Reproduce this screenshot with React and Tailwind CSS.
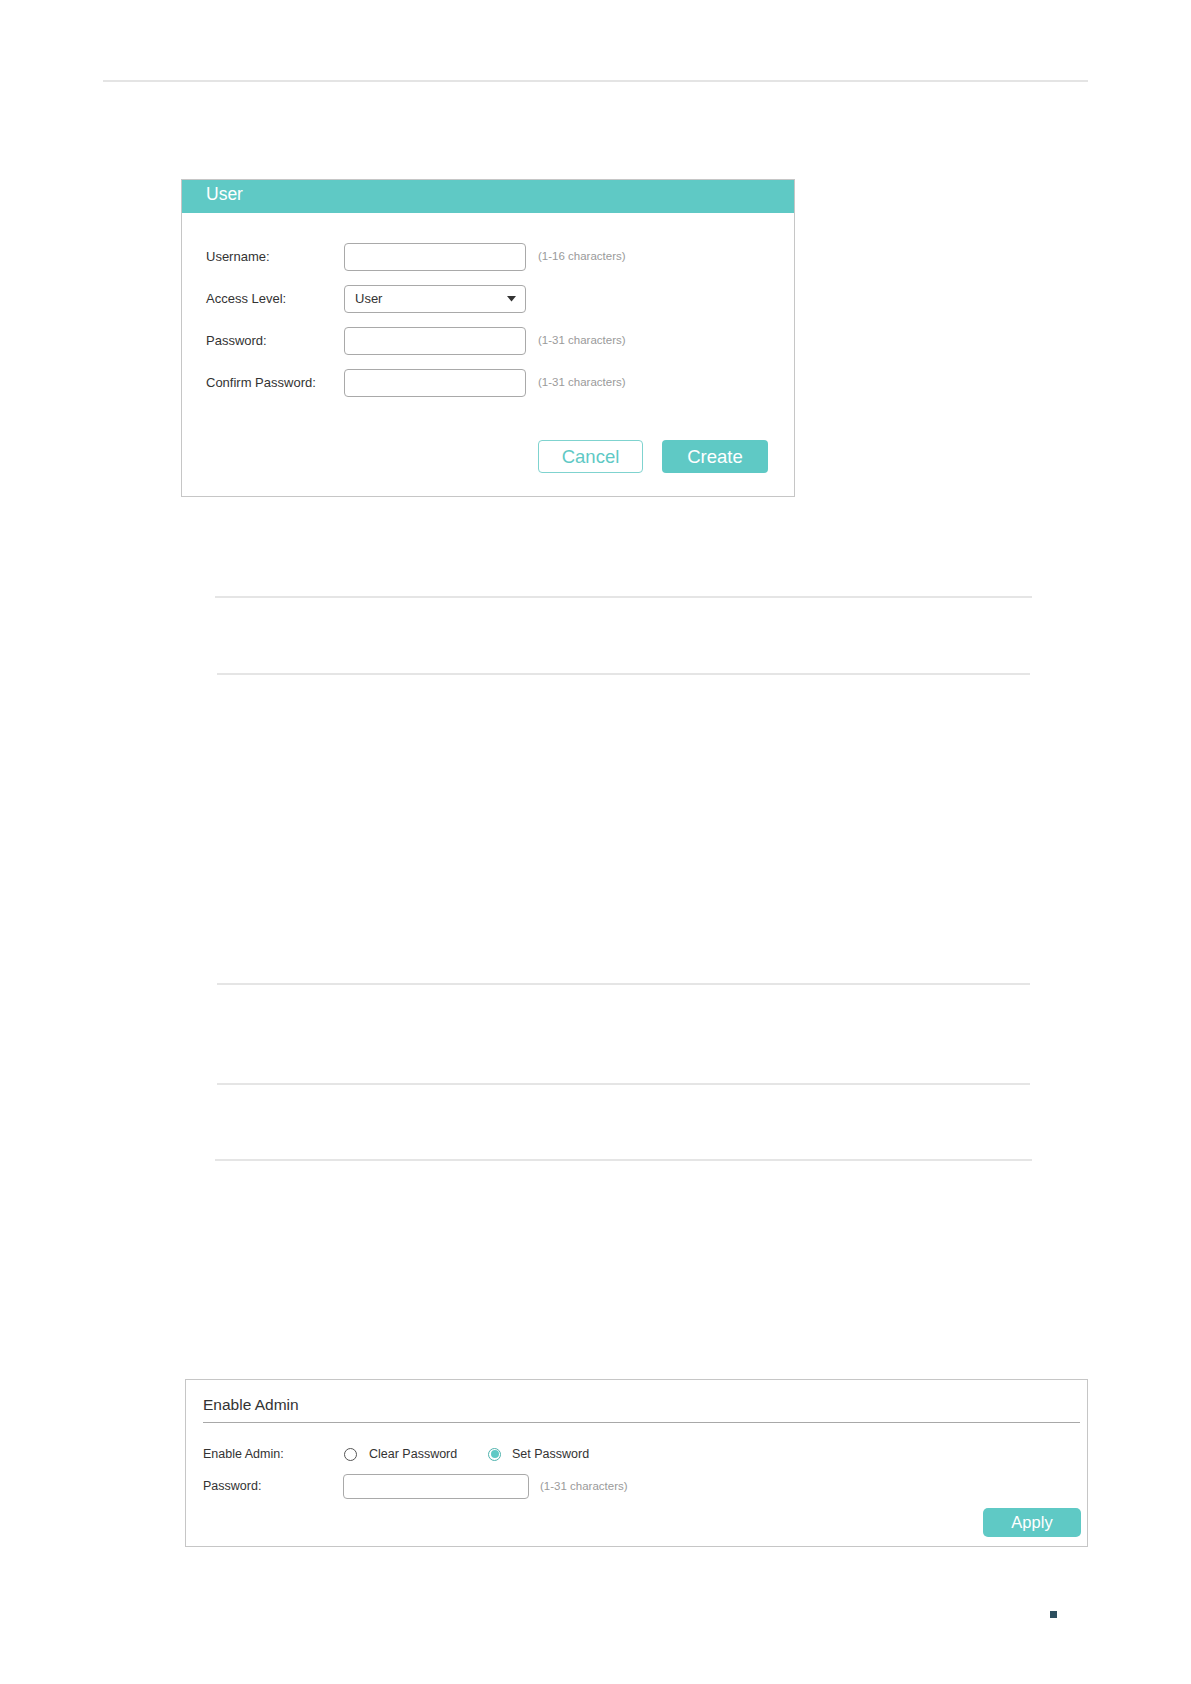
import React from 'react';

const font = { fontFamily: '"Liberation Sans", Arial, sans-serif' };

function Row({ label, children, hint }) {
  return (
    <div className="flex items-center h-[28px]">
      <span className="w-[138px] text-[13px] text-[#333]">{label}</span>
      {children}
      {hint && <span className="ml-[12px] text-[11.5px] text-[#9a9a9a]">{hint}</span>}
    </div>
  );
}

function TextBox() {
  return <div className="w-[182px] h-[28px] border border-[#a9a9a9] rounded-[4px] bg-white" />;
}

function Radio({ checked }) {
  return checked ? (
    <span className="w-[13px] h-[13px] rounded-full border border-[#4fb3ae] flex items-center justify-center">
      <span className="w-[8px] h-[8px] rounded-full bg-[#5fc9c5]" />
    </span>
  ) : (
    <span className="w-[13px] h-[13px] rounded-full border border-[#555]" />
  );
}

function Line({ ml, w, mt }) {
  return <div className={`h-[2px] bg-[#e5e5e5] ${ml} ${w} ${mt}`} />;
}

export default function App() {
  return (
    <div className="w-[1191px] h-[1684px] bg-white pt-[80px]" style={font}>
      {/* top rule */}
      <div className="ml-[103px] w-[985px] h-[2px] bg-[#e4e4e4]" />

      {/* User dialog */}
      <div className="mt-[97px] ml-[181px] w-[614px] h-[318px] border border-[#c6c6c6] flex flex-col">
        <div className="h-[33px] bg-[#5fc9c5] flex items-center pl-[24px] pb-[4px]">
          <span className="text-[17.5px] text-white">User</span>
        </div>
        <div className="pl-[24px] pt-[30px] flex flex-col gap-[14px]">
          <Row label="Username:" hint="(1-16 characters)">
            <TextBox />
          </Row>
          <Row label="Access Level:">
            <div className="w-[182px] h-[28px] border border-[#a9a9a9] rounded-[4px] flex items-center justify-between pl-[10px] pr-[9px]">
              <span className="text-[13px] text-[#333]">User</span>
              <svg width="9" height="6" viewBox="0 0 9 6">
                <path d="M0 0 L9 0 L4.5 5.5 Z" fill="#333" />
              </svg>
            </div>
          </Row>
          <Row label="Password:" hint="(1-31 characters)">
            <TextBox />
          </Row>
          <Row label="Confirm Password:" hint="(1-31 characters)">
            <TextBox />
          </Row>
        </div>
        <div className="mt-[43px] pr-[26px] flex justify-end gap-[19px]">
          <button className="w-[105px] h-[33px] rounded-[4px] border border-[#7fd3cf] bg-white text-[#5fc9c5] text-[18.5px]">
            Cancel
          </button>
          <button className="w-[106px] h-[33px] rounded-[4px] bg-[#5fc9c5] text-white text-[18.5px]">
            Create
          </button>
        </div>
      </div>

      {/* table rules */}
      <Line ml="ml-[215px]" w="w-[817px]" mt="mt-[99px]" />
      <Line ml="ml-[217px]" w="w-[813px]" mt="mt-[75px]" />
      <Line ml="ml-[217px]" w="w-[813px]" mt="mt-[308px]" />
      <Line ml="ml-[217px]" w="w-[813px]" mt="mt-[98px]" />
      <Line ml="ml-[215px]" w="w-[817px]" mt="mt-[74px]" />

      {/* Enable Admin panel */}
      <div className="mt-[218px] ml-[185px] w-[903px] h-[168px] border border-[#c6c6c6] flex flex-col">
        <div className="ml-[17px] mr-[7px] h-[43px] pt-[8px] flex items-center border-b border-[#a8a8a8]">
          <span className="text-[15.5px] text-[#333]">Enable Admin</span>
        </div>
        <div className="ml-[17px] mt-[21px] h-[20px] flex items-center">
          <span className="w-[141px] text-[12.5px] text-[#333]">Enable Admin:</span>
          <div className="w-[144px] flex items-center gap-[12px]">
            <Radio />
            <span className="text-[12.5px] text-[#333]">Clear Password</span>
          </div>
          <div className="flex items-center gap-[11px]">
            <Radio checked />
            <span className="text-[12.5px] text-[#333]">Set Password</span>
          </div>
        </div>
        <div className="ml-[17px] mt-[10px] h-[25px] flex items-center">
          <span className="w-[140px] text-[12.5px] text-[#333]">Password:</span>
          <div className="w-[186px] h-[25px] border border-[#a9a9a9] rounded-[4px]" />
          <span className="ml-[11px] text-[11.5px] text-[#9a9a9a]">(1-31 characters)</span>
        </div>
        <div className="mt-[9px] pr-[6px] flex justify-end">
          <button className="w-[98px] h-[29px] rounded-[5px] bg-[#5fc9c5] text-white text-[16.5px]">
            Apply
          </button>
        </div>
      </div>

      {/* page marker */}
      <div className="mt-[64px] ml-[1050px] w-[7px] h-[7px] bg-[#2d4f5f]" />
    </div>
  );
}
